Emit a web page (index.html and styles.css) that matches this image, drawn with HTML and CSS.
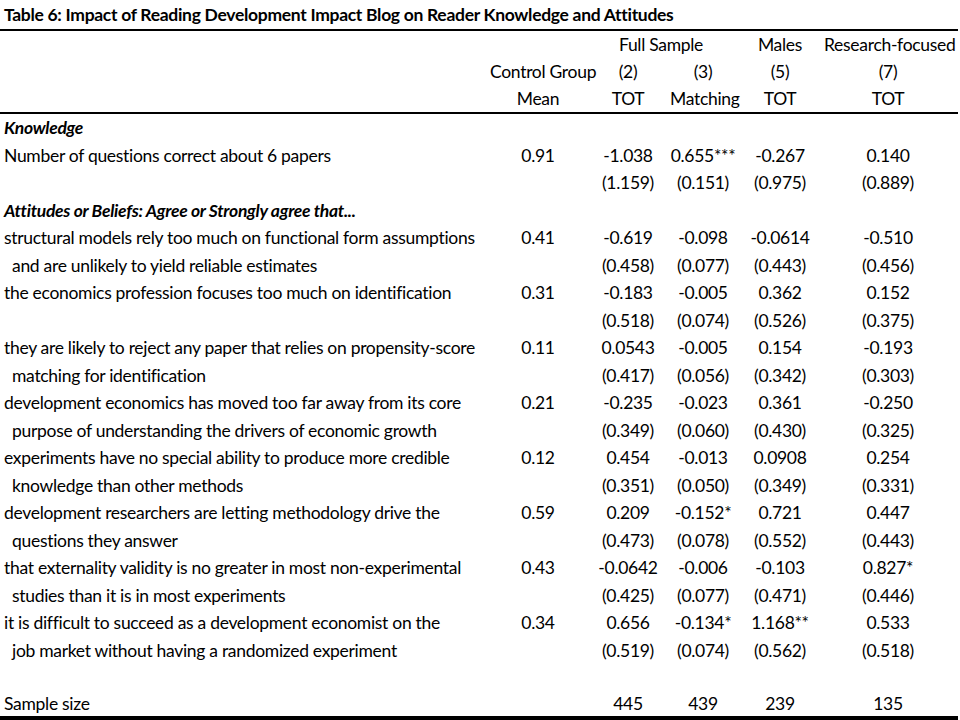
FILE: index.html
```html
<!DOCTYPE html>
<html>
<head>
<meta charset="utf-8">
<link rel="stylesheet" href="styles.css">
</head>
<body>
<div class="title">Table 6: Impact of Reading Development Impact Blog on Reader Knowledge and Attitudes</div>
<table class="tbl">
<colgroup>
<col class="c-label"><col class="c-mean"><col class="c-2"><col class="c-3"><col class="c-5"><col class="c-7">
</colgroup>
<thead>
<tr class="hrow first"><td></td><td></td><td colspan="2">Full Sample</td><td>Males</td><td class="last">Research-focused</td></tr>
<tr class="hrow"><td></td><td>Control Group</td><td>(2)</td><td>(3)</td><td>(5)</td><td class="last">(7)</td></tr>
<tr class="hrow bottom"><td></td><td>Mean</td><td>TOT</td><td>Matching</td><td>TOT</td><td class="last">TOT</td></tr>
</thead>
<tbody>
<tr><td class="sect">Knowledge</td><td></td><td></td><td></td><td></td><td class="last"></td></tr>
<tr><td class="lbl">Number of questions correct about 6 papers</td><td>0.91</td><td>-1.038</td><td>0.655***</td><td>-0.267</td><td class="last">0.140</td></tr>
<tr><td class="lbl"></td><td></td><td>(1.159)</td><td>(0.151)</td><td>(0.975)</td><td class="last">(0.889)</td></tr>
<tr><td class="sect">Attitudes or Beliefs: Agree or Strongly agree that...</td><td></td><td></td><td></td><td></td><td class="last"></td></tr>
<tr><td class="lbl">structural models rely too much on functional form assumptions</td><td>0.41</td><td>-0.619</td><td>-0.098</td><td>-0.0614</td><td class="last">-0.510</td></tr>
<tr><td class="lbl ind">and are unlikely to yield reliable estimates</td><td></td><td>(0.458)</td><td>(0.077)</td><td>(0.443)</td><td class="last">(0.456)</td></tr>
<tr><td class="lbl">the economics profession focuses too much on identification</td><td>0.31</td><td>-0.183</td><td>-0.005</td><td>0.362</td><td class="last">0.152</td></tr>
<tr><td class="lbl"></td><td></td><td>(0.518)</td><td>(0.074)</td><td>(0.526)</td><td class="last">(0.375)</td></tr>
<tr><td class="lbl">they are likely to reject any paper that relies on propensity-score</td><td>0.11</td><td>0.0543</td><td>-0.005</td><td>0.154</td><td class="last">-0.193</td></tr>
<tr><td class="lbl ind">matching for identification</td><td></td><td>(0.417)</td><td>(0.056)</td><td>(0.342)</td><td class="last">(0.303)</td></tr>
<tr><td class="lbl">development economics has moved too far away from its core</td><td>0.21</td><td>-0.235</td><td>-0.023</td><td>0.361</td><td class="last">-0.250</td></tr>
<tr><td class="lbl ind">purpose of understanding the drivers of economic growth</td><td></td><td>(0.349)</td><td>(0.060)</td><td>(0.430)</td><td class="last">(0.325)</td></tr>
<tr><td class="lbl">experiments have no special ability to produce more credible</td><td>0.12</td><td>0.454</td><td>-0.013</td><td>0.0908</td><td class="last">0.254</td></tr>
<tr><td class="lbl ind">knowledge than other methods</td><td></td><td>(0.351)</td><td>(0.050)</td><td>(0.349)</td><td class="last">(0.331)</td></tr>
<tr><td class="lbl">development researchers are letting methodology drive the</td><td>0.59</td><td>0.209</td><td>-0.152*</td><td>0.721</td><td class="last">0.447</td></tr>
<tr><td class="lbl ind">questions they answer</td><td></td><td>(0.473)</td><td>(0.078)</td><td>(0.552)</td><td class="last">(0.443)</td></tr>
<tr><td class="lbl">that externality validity is no greater in most non-experimental</td><td>0.43</td><td>-0.0642</td><td>-0.006</td><td>-0.103</td><td class="last">0.827*</td></tr>
<tr><td class="lbl ind">studies than it is in most experiments</td><td></td><td>(0.425)</td><td>(0.077)</td><td>(0.471)</td><td class="last">(0.446)</td></tr>
<tr><td class="lbl">it is difficult to succeed as a development economist on the</td><td>0.34</td><td>0.656</td><td>-0.134*</td><td>1.168**</td><td class="last">0.533</td></tr>
<tr><td class="lbl ind">job market without having a randomized experiment</td><td></td><td>(0.519)</td><td>(0.074)</td><td>(0.562)</td><td class="last">(0.518)</td></tr>
<tr><td class="lbl"></td><td></td><td></td><td></td><td></td><td class="last"></td></tr>
<tr class="final"><td class="lbl">Sample size</td><td></td><td>445</td><td>439</td><td>239</td><td class="last">135</td></tr>
</tbody>
</table>
</body>
</html>
```

FILE: styles.css
```css
html, body {
  margin: 0;
  padding: 0;
  background: #ffffff;
}
body {
  font-family: Lato, "Open Sans", sans-serif;
  color: #000000;
  font-size: 17.5px;
  letter-spacing: -0.3px;
}
.title {
  font-weight: bold;
  height: 29px;
  line-height: 30px;
  padding-left: 4px;
  box-sizing: border-box;
}
.tbl {
  border-collapse: collapse;
  table-layout: fixed;
  width: 958px;
  border-top: 2px solid #000;
  border-bottom: 4px solid #000;
}
.c-label { width: 490px; }
.c-mean { width: 96px; }
.c-2 { width: 84px; }
.c-3 { width: 66px; }
.c-5 { width: 88px; }
.c-7 { width: 134px; }
.tbl td {
  padding: 0;
  height: 27.5px;
  text-align: center;
  white-space: nowrap;
  vertical-align: middle;
}
.tbl td.last {
  padding-right: 6px;
}
.hrow td {
  height: 27px;
}
.hrow.bottom td {
  border-bottom: 2px solid #000;
}
.tbl td.lbl, .tbl td.sect {
  text-align: left;
  padding-left: 4px;
}
.tbl td.ind {
  padding-left: 12px;
}
.tbl td.sect {
  font-weight: bold;
  font-style: italic;
}
.final td {
  height: 24px;
}
```
